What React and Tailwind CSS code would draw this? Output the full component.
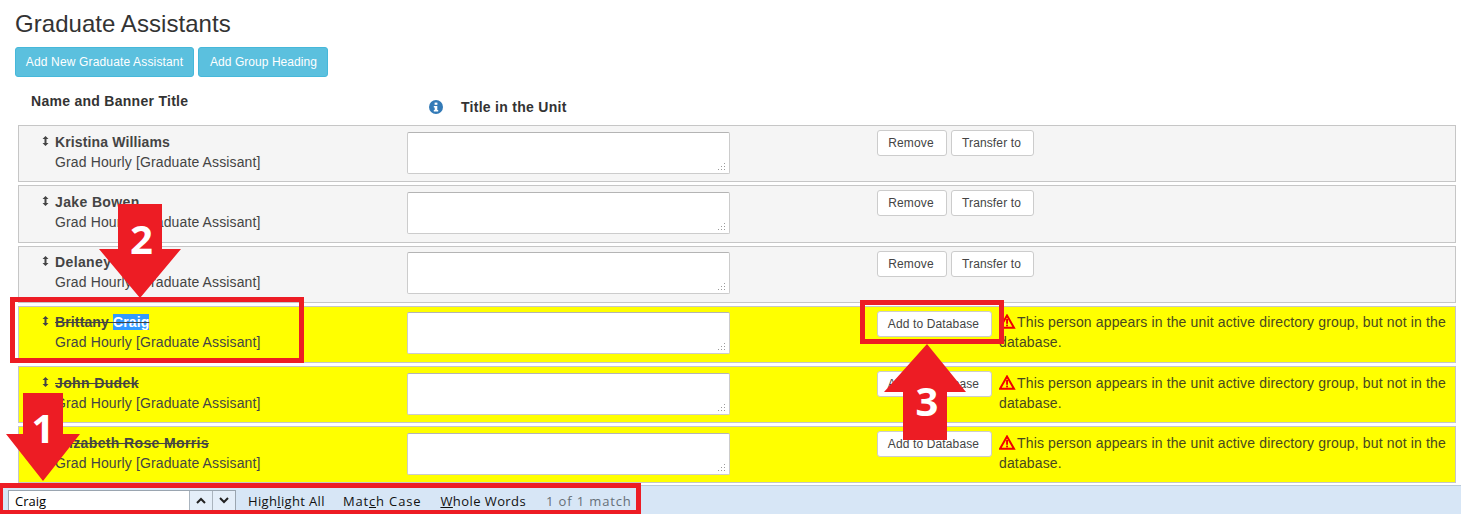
const sans = "font-['Liberation_Sans',Arial,sans-serif]";

function Grip() {
  return (
    <svg width="7" height="10" viewBox="0 0 7 10" className="shrink-0 mt-[4px] mr-[6px]" fill="#444444">
      <path d="M3.5 0 L6.5 3 L4.5 3 L4.5 7 L6.5 7 L3.5 10 L0.5 7 L2.5 7 L2.5 3 L0.5 3 Z" />
    </svg>
  );
}

function Warn() {
  return (
    <svg width="17" height="15" viewBox="0 0 17 15" className="inline-block align-[-2px] mr-[1px]">
      <path d="M8 1.5 L15 13.8 L1 13.8 Z" fill="#ffff00" stroke="#f00000" strokeWidth="2" strokeLinejoin="miter" />
      <rect x="7.1" y="5" width="1.9" height="4.8" fill="#f00000" />
      <rect x="7.1" y="10.6" width="1.9" height="1.8" fill="#f00000" />
    </svg>
  );
}

function Btn({ children, className = "" }) {
  return (
    <button className={`h-[26px] pr-[2px] rounded-[3px] border border-[#cccccc] bg-white text-[12px] tracking-[0.13px] text-[#444444] ${className}`}>
      {children}
    </button>
  );
}

function Row({ pre, hit, h, warn, mt, up, wide }) {
  return (
    <div className={`flex border border-[#c6c6c6] ${warn ? "bg-[#ffff00]" : "bg-[#f5f5f5]"} ${h} ${mt}`}>
      <div className={`w-[388px] shrink-0 pl-[23px] ${up ? "pt-[5px]" : "pt-[6px]"}`}>
        <div className="flex h-[20px] items-start">
          <Grip />
          <span className={`text-[14px] leading-[20px] font-bold text-[#444444] ${wide ? "tracking-[0.37px]" : "tracking-[0.13px]"} ${warn ? "line-through" : ""}`}>
            {pre}
            {hit && <span className="bg-[#3399ff] text-white">{hit}</span>}
          </span>
        </div>
        <div className="pl-[13px] text-[14px] leading-[20px] tracking-[0.13px] text-[#444444]">Grad Hourly [Graduate Assisant]</div>
      </div>
      <div className={`w-[323px] shrink-0 ${up ? "pt-[5px]" : "pt-[6px]"}`}>
        <div className="relative h-[42px] rounded-[2px] border border-[#cccccc] border-t-[#b4b4b4] bg-white">
          <svg width="8" height="8" viewBox="0 0 8 8" className="absolute right-[3px] bottom-[2px]" fill="#9a9a9a">
            <rect x="6" y="0" width="1" height="1" /><rect x="6" y="3" width="1" height="1" /><rect x="3" y="3" width="1" height="1" />
            <rect x="6" y="6" width="1" height="1" /><rect x="3" y="6" width="1" height="1" /><rect x="0" y="6" width="1" height="1" />
          </svg>
        </div>
      </div>
      <div className="ml-[147px] w-[157px] shrink-0 pt-[4px] flex gap-[4px] items-start">
        {warn ? <Btn className="w-[115px]">Add to Database</Btn> : (
          <>
            <Btn className="w-[70px]">Remove</Btn>
            <Btn className="w-[83px]">Transfer to</Btn>
          </>
        )}
      </div>
      {warn && (
        <div className={`-ml-[35px] w-[452px] text-[14px] leading-[20px] tracking-[0.145px] text-[#48481f] ${up ? "mt-[5px]" : "mt-[6px]"}`}>
          <Warn />This person appears in the unit active directory group, but not in the database.
        </div>
      )}
    </div>
  );
}

function Frame({ className }) {
  return <div className={`absolute border-[5px] border-[#ed1c24] ${className}`} />;
}

const num = "absolute text-center font-bold text-white text-[40px] leading-[60px] font-['Open_Sans',sans-serif]";

export default function App() {
  return (
    <div className={`relative h-[514px] w-[1461px] overflow-hidden bg-white flex flex-col text-[#333333] ${sans}`}>
      <div className="flex-1 min-h-0 overflow-hidden pl-[15px] pr-[5px]">
        <h1 className="pt-[11px] text-[24px] leading-[26px] tracking-[0.05px] font-normal text-[#333333]">Graduate Assistants</h1>
        <div className="mt-[10px] flex gap-[4px]">
          <button className="h-[30px] w-[179px] rounded-[3px] border border-[#46b8da] bg-[#5bc0de] text-[12px] tracking-[0.15px] text-white">Add New Graduate Assistant</button>
          <button className="h-[30px] w-[130px] pl-[1px] rounded-[3px] border border-[#46b8da] bg-[#5bc0de] text-[12px] tracking-[0.05px] text-white">Add Group Heading</button>
        </div>
        <div className="flex h-[48px] font-bold text-[14px] tracking-[0.28px] text-[#333333]">
          <div className="w-[414px] pl-[16px] pt-[16px] leading-[16px]">Name and Banner Title</div>
          <svg width="14" height="14" viewBox="0 0 14 14" className="mt-[23px] shrink-0">
            <circle cx="7" cy="7" r="7" fill="#337ab7" />
            <rect x="5.6" y="2.6" width="2.8" height="2.2" fill="#fff" />
            <path d="M4.8 6 H8.3 V10 H9.2 V11.4 H4.8 V10 H5.7 V7.4 H4.8 Z" fill="#fff" />
          </svg>
          <div className="pl-[18px] pt-[22px] leading-[16px]">Title in the Unit</div>
        </div>
        <div className="ml-[3px] w-[1438px]">
          <Row pre="Kristina Williams" h="h-[57px]" mt="" />
          <Row pre="Jake Bowen" h="h-[58px]" mt="mt-[3px]" wide />
          <Row pre="Delaney Fowler" h="h-[57px]" mt="mt-[3px]" up wide />
          <Row pre="Brittany " hit="Craig" h="h-[57px]" mt="mt-[3px]" warn up />
          <Row pre="John Dudek" h="h-[57px]" mt="mt-[3px]" warn wide />
          <Row pre="Elizabeth Rose Morris" h="h-[57px]" mt="mt-[3px]" warn wide />
        </div>
      </div>

      <div className="h-[29px] shrink-0 border-t border-[#b9c9d8] bg-[#d7e6f6] flex items-center pl-[8px] font-['Open_Sans',sans-serif] text-[13px] tracking-[0.35px] text-[#111111]">
        <div className="mt-[1px] flex h-[21px] w-[228px] border border-[#9aa5b0] bg-white">
          <div className="flex-1 pl-[6px] leading-[20px] tracking-normal text-black">Craig</div>
          <div className="w-[23px] border-l border-[#aab4be] bg-[#e4eef9] flex items-center justify-center">
            <svg width="10" height="7" viewBox="0 0 10 7" fill="none" stroke="#222" strokeWidth="2"><path d="M1 6 L5 2 L9 6" /></svg>
          </div>
          <div className="w-[23px] border-l border-[#aab4be] bg-[#e4eef9] flex items-center justify-center">
            <svg width="10" height="7" viewBox="0 0 10 7" fill="none" stroke="#222" strokeWidth="2"><path d="M1 1 L5 5 L9 1" /></svg>
          </div>
        </div>
        <span className="ml-[12px] mt-[3px]">High<u>l</u>ight All</span>
        <span className="ml-[18px] mt-[3px] tracking-[0.85px]">Mat<u>c</u>h Case</span>
        <span className="ml-[19px] mt-[3px] tracking-[0.42px]"><u>W</u>hole Words</span>
        <span className="ml-[20px] mt-[3px] tracking-[0.85px] text-[#666f78]">1 of 1 match</span>
      </div>

      <Frame className="left-[10px] top-[297px] h-[66px] w-[294px]" />
      <Frame className="left-[860px] top-[300px] h-[44px] w-[144px]" />
      <Frame className="left-[-2px] top-[483px] h-[32px] w-[643px]" />

      <div className="absolute left-[99px] top-[204px] h-[94px] w-[82px]">
        <svg width="82" height="94" viewBox="0 0 82 94" className="absolute inset-0">
          <path d="M19 0 H63 V45 H82 L41 94 L0 45 H19 Z" fill="#ed1c24" />
        </svg>
        <span className={`${num} left-[3px] right-0 top-[5px]`}>2</span>
      </div>
      <div className="absolute left-[6px] top-[393px] h-[88px] w-[74px]">
        <svg width="74" height="88" viewBox="0 0 74 88" className="absolute inset-0">
          <path d="M17 0 H57 V41 H74 L37 88 L0 41 H17 Z" fill="#ed1c24" />
        </svg>
        <span className={`${num} left-0 right-0 top-[5px]`}>1</span>
      </div>
      <div className="absolute left-[884px] top-[344px] h-[96px] w-[82px]">
        <svg width="82" height="96" viewBox="0 0 82 96" className="absolute inset-0">
          <path d="M43 0 L82 48 H63 V96 H19 V48 H0 Z" fill="#ed1c24" />
        </svg>
        <span className={`${num} left-[4px] right-0 top-[27px]`}>3</span>
      </div>
    </div>
  );
}
